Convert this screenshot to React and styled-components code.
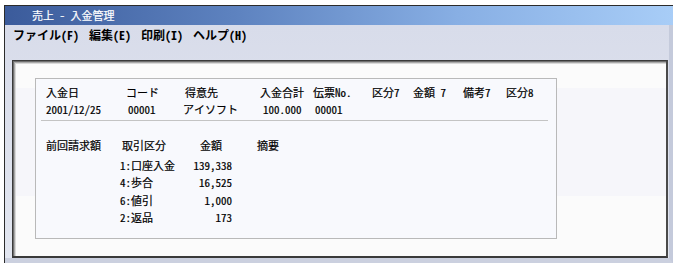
import React from 'react'
import styled, { createGlobalStyle } from 'styled-components'

const GlobalStyle = createGlobalStyle`
  body {
    margin: 0;
    background: #fff;
    font-family: "Noto Sans Mono CJK JP", "Noto Sans CJK JP", sans-serif;
  }
`

const headCols = '80px 59px 75px 53px 59px 41px 50px 43px auto'
const dataCols = '82px 55px 80px 52px auto'
const histCols = '76px 78px 57px auto'

const items = [
  { code: '1:口座入金', amount: '139,338' },
  { code: '4:歩合', amount: '16,525' },
  { code: '6:値引', amount: '1,000' },
  { code: '2:返品', amount: '173' },
]

const App = () => {
  return (
    <>
      <GlobalStyle />
      <Window>
        <TitleBar>売上 - 入金管理</TitleBar>
        <Frame>
          <MenuBar>
            <MenuItem>ファイル(F)</MenuItem>
            <MenuItem>編集(E)</MenuItem>
            <MenuItem>印刷(I)</MenuItem>
            <MenuItem>ヘルプ(H)</MenuItem>
          </MenuBar>
          <Panel>
            <Card>
              <Row cols={headCols}>
                <span>入金日</span>
                <span>コード</span>
                <span>得意先</span>
                <span>入金合計</span>
                <span>伝票No.</span>
                <span>区分7</span>
                <span>金額{'\u2002'}7</span>
                <span>備考7</span>
                <span>区分8</span>
              </Row>
              <Row cols={dataCols}>
                <span>2001/12/25</span>
                <span>00001</span>
                <span>アイソフト</span>
                <span>100.000</span>
                <span>00001</span>
              </Row>
              <Divider />
              <Row cols={histCols} $top={16}>
                <span>前回請求額</span>
                <span>取引区分</span>
                <span>金額</span>
                <span>摘要</span>
              </Row>
              <ItemList>
                {items.map(item => (
                  <ItemRow key={item.code}>
                    <span />
                    <span>{item.code}</span>
                    <Amount>{item.amount}</Amount>
                  </ItemRow>
                ))}
              </ItemList>
            </Card>
          </Panel>
        </Frame>
      </Window>
    </>
  )
}

export default App

const Window = styled.div`
  margin: 5px 0 0 4px;
  width: 668px;
  border-top: 1px solid #2b2b2b;
  border-left: 1px solid #2b2b2b;
  display: flex;
  flex-direction: column;
`

const TitleBar = styled.div`
  height: 19px;
  line-height: 19px;
  padding-left: 27px;
  color: #fff;
  font-size: 11px;
  -webkit-text-stroke: 0.2px #fff;
  background: linear-gradient(to right, #3b5b9b 0%, #5e83c0 35%, #88afe4 68%, #a8cdf7 100%);
`

const Frame = styled.div`
  background: linear-gradient(#d8dcea, #e2e6f0);
  border-right: 4px solid #c4cadb;
  border-bottom: 5px solid #cbd0df;
  padding: 0 1px 0 7px;
`

const MenuBar = styled.div`
  display: flex;
  gap: 10px;
  height: 19px;
  padding-left: 1px;
  margin-bottom: 16px;
`

const MenuItem = styled.div`
  font-size: 12px;
  font-weight: 700;
  line-height: 19px;
  color: #000;
`

const Panel = styled.div`
  box-sizing: border-box;
  height: 198px;
  padding: 17px 0 0 22px;
  background:
    linear-gradient(#f6f6fa, #f6f6fa) 0 27px / 100% 108px no-repeat,
    #fbfbfb;
  border-top: 1px solid #3a3a3a;
  border-left: 1px solid #3a3a3a;
  border-right: 2px solid #4a4a4a;
  border-bottom: 2px solid #3a3a3a;
  box-shadow: inset 1px 1px 0 #6f6f6f, inset 2px 2px 0 #a9a9a9, inset 3px 3px 0 #d9d9d9;
`

const Card = styled.div`
  box-sizing: border-box;
  width: 522px;
  height: 161px;
  padding: 5px 0 0 10px;
  border: 1px solid #b9b9b9;
  background: #f8f9fd;
  font-size: 11px;
  color: #000;
  -webkit-text-stroke: 0.2px #000;
`

const Row = styled.div`
  display: grid;
  grid-template-columns: ${p => p.cols};
  line-height: 17px;
  margin-top: ${p => p.$top || 0}px;
  white-space: nowrap;
`

const Divider = styled.div`
  height: 1px;
  background: #c4c4c4;
  margin: 2px 8px 0 -5px;
`

const ItemList = styled.div`
  margin-top: 2.5px;
`

const ItemRow = styled.div`
  display: grid;
  grid-template-columns: 74px 56px 56px;
  line-height: 17.5px;
  white-space: nowrap;
`

const Amount = styled.span`
  text-align: right;
`
